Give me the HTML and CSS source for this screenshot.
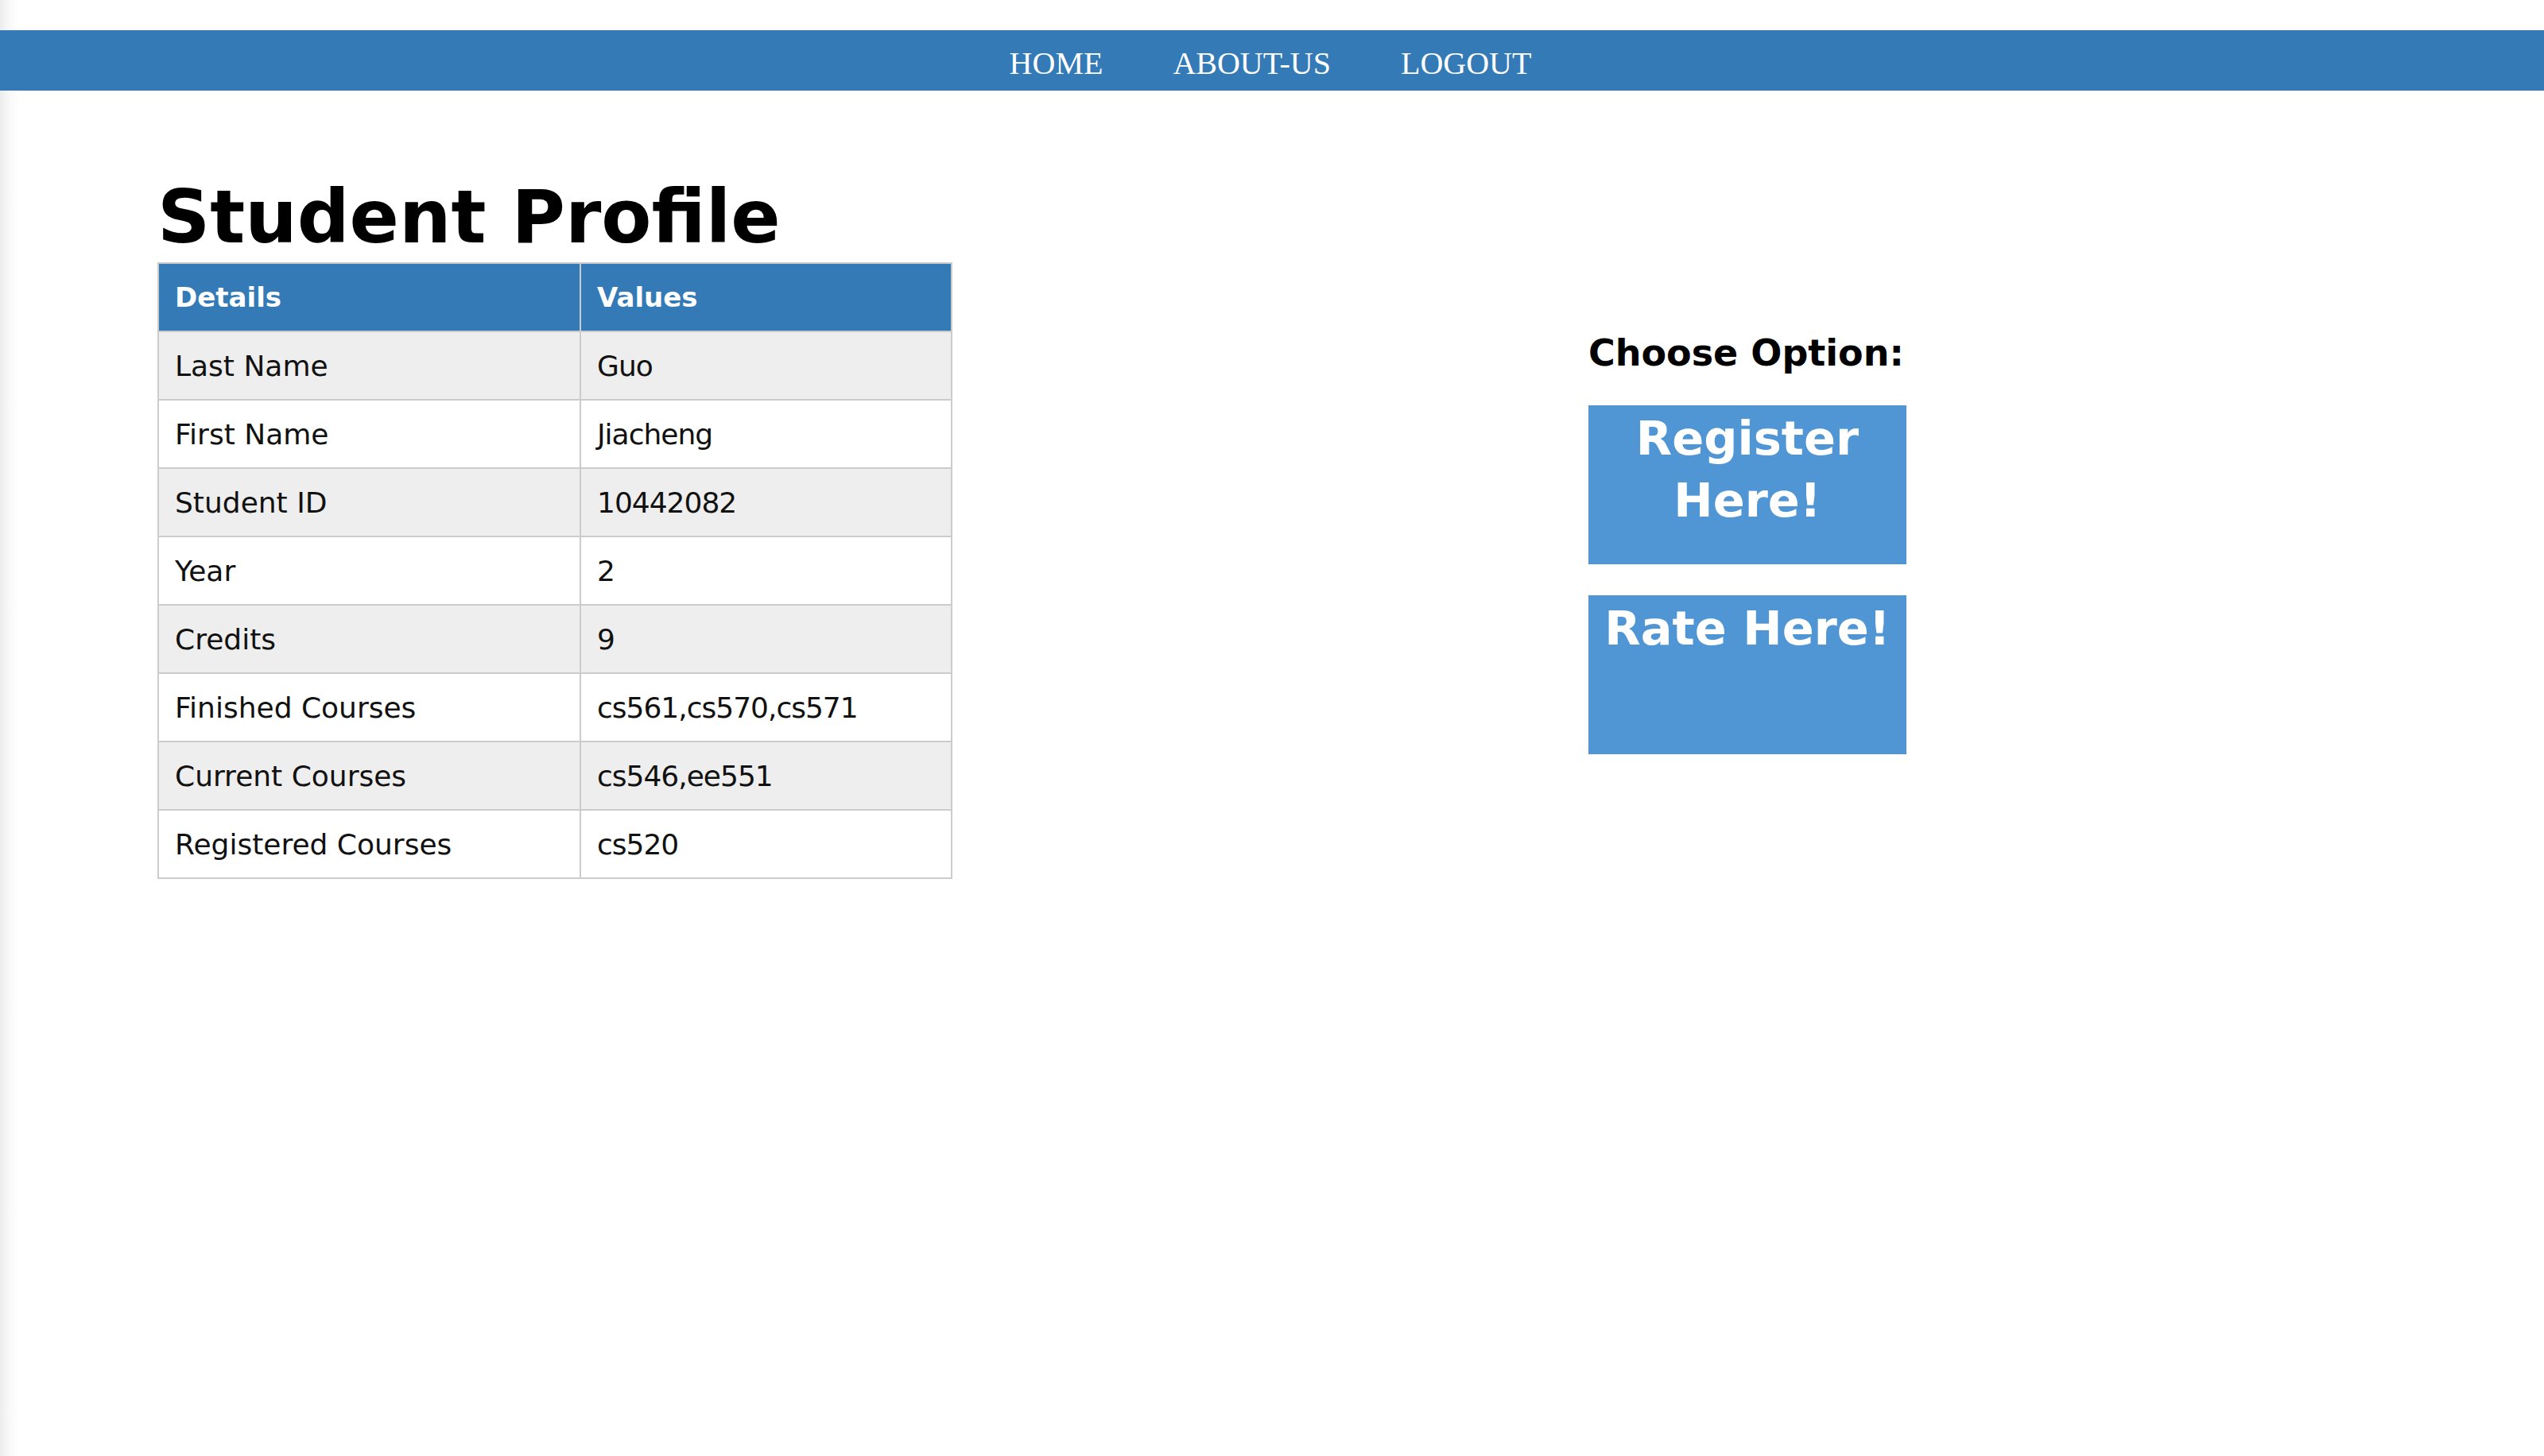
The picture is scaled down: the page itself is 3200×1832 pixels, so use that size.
FILE: index.html
```html
<!DOCTYPE html>
<html lang="en">
<head>
<meta charset="utf-8">
<title>Student Profile</title>
<link rel="stylesheet" href="styles.css">
</head>
<body>
<nav class="topnav">
  <a class="nav-link" href="#">HOME</a>
  <a class="nav-link" href="#">ABOUT-US</a>
  <a class="nav-link" href="#">LOGOUT</a>
</nav>
<main class="content">
  <section class="profile">
    <h1 class="title">Student Profile</h1>
    <table class="details">
      <colgroup><col class="col-key"><col class="col-val"></colgroup>
      <thead>
        <tr><th>Details</th><th>Values</th></tr>
      </thead>
      <tbody>
        <tr><td>Last Name</td><td>Guo</td></tr>
        <tr><td>First Name</td><td>Jiacheng</td></tr>
        <tr><td>Student ID</td><td>10442082</td></tr>
        <tr><td>Year</td><td>2</td></tr>
        <tr><td>Credits</td><td>9</td></tr>
        <tr><td>Finished Courses</td><td>cs561,cs570,cs571</td></tr>
        <tr><td>Current Courses</td><td>cs546,ee551</td></tr>
        <tr><td>Registered Courses</td><td>cs520</td></tr>
      </tbody>
    </table>
  </section>
  <aside class="options">
    <h3 class="options-title">Choose Option:</h3>
    <a class="option-btn" href="#">Register<br>Here!</a>
    <a class="option-btn" href="#">Rate Here!</a>
  </aside>
</main>
</body>
</html>
```
FILE: styles.css
```css
html, body {
  margin: 0;
  padding: 0;
}
body {
  min-height: 1832px;
  background: linear-gradient(to right, #ededed 0, #f8f8f8 10px, #ffffff 24px);
  font-family: "DejaVu Sans", "Liberation Sans", sans-serif;
  color: #000;
}
.topnav {
  margin-top: 38px;
  height: 69px;
  padding-top: 7px;
  padding-right: 4px;
  background: #337ab7;
  display: flex;
  justify-content: center;
  gap: 88px;
}
.nav-link {
  font-family: "Liberation Serif", "Times New Roman", serif;
  font-size: 40px;
  line-height: 69px;
  color: #fff;
  text-decoration: none;
}
.content {
  display: flex;
  align-items: flex-start;
  padding-left: 198px;
  padding-top: 110px;
}
.profile {
  width: 1004px;
}
.title {
  margin: 0 0 6px 0;
  font-size: 92px;
  line-height: 100px;
  font-weight: 700;
  letter-spacing: 0;
  white-space: nowrap;
}
.details {
  width: 998px;
  table-layout: fixed;
  border-collapse: collapse;
  border: 2px solid #cccccc;
  font-size: 36px;
  color: #111;
}
.col-key { width: 531px; }
.col-val { width: 467px; }
.details th,
.details td {
  border: 2px solid #cccccc;
  height: 84px;
  padding: 0 0 0 20px;
  text-align: left;
  vertical-align: middle;
  white-space: nowrap;
}
.details td:nth-child(2) {
  letter-spacing: -1px;
}
.details th {
  background: #337ab7;
  color: #fff;
  font-weight: 700;
  font-size: 34px;
}
.details tbody tr:nth-child(odd) td {
  background: #eeeeee;
}
.details tbody tr:nth-child(even) td {
  background: #ffffff;
}
.options {
  margin-left: 796px;
  margin-top: 194px;
  width: 400px;
  display: flex;
  flex-direction: column;
}
.options-title {
  margin: 0 0 40px 0;
  font-size: 46px;
  line-height: 52px;
  font-weight: 700;
  white-space: nowrap;
}
.option-btn {
  display: block;
  box-sizing: border-box;
  width: 400px;
  height: 200px;
  padding-top: 3px;
  margin-bottom: 39px;
  background: #5096d5;
  color: #fff;
  text-decoration: none;
  text-align: center;
  font-size: 59px;
  line-height: 78px;
  font-weight: 700;
}
```
